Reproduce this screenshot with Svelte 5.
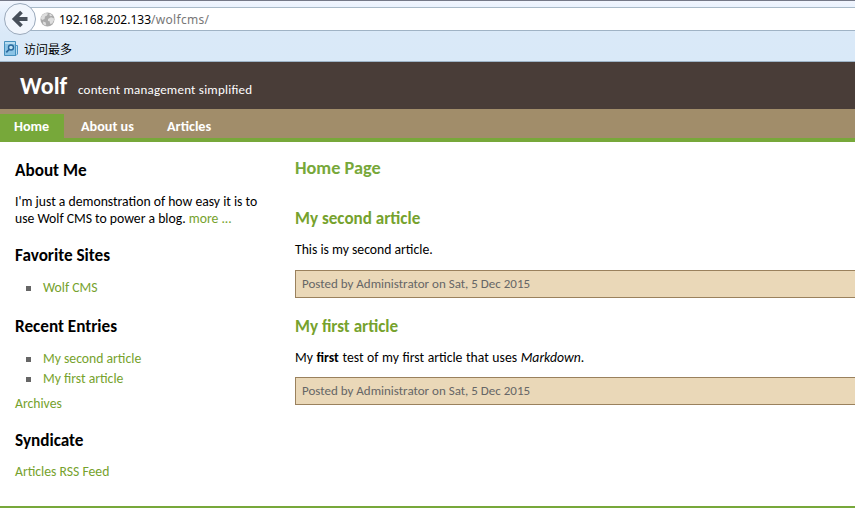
<script>
  const posts = [
    { title: 'My second article', kind: 'second' },
    { title: 'My first article', kind: 'first' }
  ];
</script>

<div class="window">
  <div class="chrome">
    <div class="addressrow">
      <div class="urlbar">
        <svg class="globe" width="15" height="15" viewBox="0 0 15 15">
          <circle cx="7.5" cy="7.5" r="7" fill="#aaa" />
          <path d="M2 3.5 5 1l3 .4-1 2.2-2 1L4.5 7 2 8 .8 6z M8 7l3-1.8 2.8 1.1 .2 2-1.8 3.3-2 .5-.6-2.8L8 9z M10 1.5l2.5 2-2 .7-1.3-1.1z M3 9.5l2.5.7.7 2.4-1 1-2-1.7z" fill="#dedede" />
        </svg>
        <span class="url">192.168.202.133<span class="path">/wolfcms/</span></span>
      </div>
      <svg class="back" width="34" height="35" viewBox="0 0 34 35">
        <circle cx="17" cy="18" r="15.5" fill="#f1f6fd" stroke="#9aa9bb" />
        <path d="M18.5 11 11.5 18 18.5 25M12.5 18H24.5" fill="none" stroke="#474f5a" stroke-width="3.8" />
      </svg>
    </div>
    <div class="bookmarks">
      <svg width="15" height="16" viewBox="0 0 15 16">
        <path d="M11 4.5h2.5V13l-1.5 1.5h-2" fill="#b8dcf1" stroke="#4c94c3" />
        <path d="M.5.5h11v14H.5z" fill="#8bc4e6" stroke="#4590bd" />
        <path d="M1 1h10v2H1z" fill="#b9ddf0" />
        <circle cx="7" cy="6.5" r="2.5" fill="#c2e3f4" stroke="#29699c" stroke-width="1.4" />
        <path d="M5 8.5 2.3 11.3" stroke="#29699c" stroke-width="1.8" />
      </svg>
      <span>访问最多</span>
    </div>
  </div>

  <header><h1>Wolf</h1><span class="tagline">content management simplified</span></header>
  <nav><a class="current home">Home</a><a class="about">About us</a><a class="arts">Articles</a></nav>

  <div class="page">
    <aside>
      <h3>About Me</h3>
      <p>I'm just a demonstration of how easy it is to<br />use Wolf CMS to power a blog. <a>more ...</a></p>
      <h3>Favorite Sites</h3>
      <ul><li><a>Wolf CMS</a></li></ul>
      <h3>Recent Entries</h3>
      <ul>
        {#each posts as post}<li><a>{post.title}</a></li>{/each}
      </ul>
      <p class="archives"><a>Archives</a></p>
      <h3>Syndicate</h3>
      <p><a>Articles RSS Feed</a></p>
    </aside>
    <main>
      <h2>Home Page</h2>
      {#each posts as post}
        <article class={post.kind}>
          <h3>{post.title}</h3>
          {#if post.kind === 'second'}
            <p>This is my second article.</p>
          {:else}
            <p>My <b>first</b> test of my first article that uses <i>Markdown</i>.</p>
          {/if}
          <div class="info"><span>Posted by Administrator on Sat, 5 Dec 2015</span></div>
        </article>
      {/each}
    </main>
  </div>
  <footer></footer>
</div>

<style>
  :global(body) { margin: 0; background: #fff; }
  .window { width: 855px; height: 508px; overflow: hidden; display: flex; flex-direction: column; font-family: Carlito, Calibri, Lato, sans-serif; font-size: 13.7px; color: #000; }
  .window > * { flex-shrink: 0; box-sizing: border-box; }
  h1, h2, h3, p, ul { margin: 0; padding: 0; }
  a { color: #76a22d; }
  .chrome { height: 62px; border-top: 1px solid #747887; border-bottom: 1px solid #9eb4c7; background: linear-gradient(#f1f5fe 0, #e4effc 12px, #dae9f8 32px, #d9e9f8 100%); }
  .addressrow { height: 36px; padding-top: 6px; box-sizing: border-box; position: relative; }
  .urlbar { height: 24px; box-sizing: border-box; margin-left: 20px; border-top: 1px solid #a9bac9; border-bottom: 1px solid #a0b3c5; background: #fff; display: flex; align-items: center; padding-left: 20px; }
  .back { position: absolute; left: 3px; top: 0; }
  .url { margin-left: 4px; padding-top: 1px; font: 12px/20px "Noto Sans", sans-serif; white-space: nowrap; }
  .path { color: #777; letter-spacing: .3px; }
  .bookmarks { display: flex; align-items: center; height: 24px; padding-left: 4px; font: 12px/20px "Noto Sans CJK SC", sans-serif; }
  .bookmarks span { margin-left: 5px; }
  header { height: 47px; background: #493d38; color: #fff; display: flex; align-items: baseline; padding: 10px 0 0 20px; }
  h1 { font-size: 24px; line-height: 28px; width: 58px; }
  .tagline { font-size: 13px; letter-spacing: .22px; font-feature-settings: "liga" 1; white-space: nowrap; }
  nav { height: 33px; background: #a18d6a; border-bottom: 4px solid #77a83a; display: flex; padding-top: 5px; font-weight: bold; font-size: 14.2px; line-height: 25px; }
  nav a { color: #fff; box-sizing: border-box; white-space: nowrap; }
  .home { width: 64px; padding-left: 14px; background: #77a83a; }
  .about { width: 86px; padding-left: 17px; }
  .arts { padding-left: 17px; }
  .page { display: flex; height: 364px; }
  aside { width: 295px; box-sizing: border-box; padding: 19px 0 0 15px; white-space: nowrap; }
  aside h3 { font-size: 17.2px; line-height: 20px; margin-bottom: 12px; }
  aside p { line-height: 17px; margin-bottom: 19px; }
  ul { list-style: none; margin-bottom: 19px; }
  li { line-height: 20px; display: flex; align-items: center; }
  li::before { content: ''; width: 5px; height: 5px; background: #666; margin: 1px 12px 1px 11px; }
  .archives { margin-top: -13px; }
  main { flex: 1; padding-top: 16px; white-space: nowrap; }
  h2 { font-size: 18.3px; line-height: 20px; margin-bottom: 31px; color: #77a83a; }
  main h3 { font-size: 17.1px; line-height: 20px; color: #76a22d; margin-bottom: 12px; }
  main p { line-height: 17px; margin-bottom: 12px; }
  .first { padding-top: 1px; }
  .first p { margin-bottom: 11px; word-spacing: .5px; }
  .info { height: 28px; box-sizing: border-box; border: 1px solid #9a815d; border-right: 0; background: #ead8b8; padding-left: 6px; line-height: 26px; font-size: 13px; color: #666; margin-bottom: 18px; }
  footer { height: 2px; background: #77a83a; }
</style>
